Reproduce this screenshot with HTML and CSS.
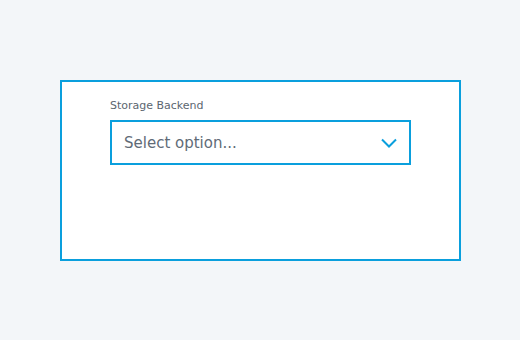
FILE: index.html
```html
<!DOCTYPE html>
<html>
<head>
<meta charset="utf-8">
<link rel="stylesheet" href="styles.css">
</head>
<body>
<div class="stage">
  <div class="card">
    <div class="field">
      <label class="label">Storage Backend</label>
      <div class="select">
        <span class="placeholder">Select option...</span>
        <svg class="chevron" width="16" height="10" viewBox="0 0 16 10"><path d="M1 1.5 L8 8.5 L15 1.5" fill="none" stroke="#0a9fdd" stroke-width="2"/></svg>
      </div>
    </div>
  </div>
</div>
</body>
</html>
```

FILE: styles.css
```css
html, body {
  margin: 0;
  padding: 0;
  background: #f3f6f9;
}
.stage {
  box-sizing: border-box;
  width: 520px;
  height: 340px;
  padding: 80px 0 0 60px;
}
.card {
  box-sizing: border-box;
  width: 401px;
  height: 181px;
  background: #ffffff;
  border: 2px solid #0a9fdd;
  padding: 17px 48px;
  font-family: "DejaVu Sans", sans-serif;
}
.field {
  display: flex;
  flex-direction: column;
}
.label {
  font-size: 11px;
  line-height: 13px;
  color: #5c6670;
  margin-bottom: 8px;
}
.select {
  box-sizing: border-box;
  width: 301px;
  height: 45px;
  border: 2px solid #0a9fdd;
  display: flex;
  align-items: center;
  justify-content: space-between;
  padding: 0 12px 0 12px;
}
.placeholder {
  font-size: 15px;
  color: #5f6b77;
}
.chevron {
  display: block;
  margin-top: 1px;
}
```
